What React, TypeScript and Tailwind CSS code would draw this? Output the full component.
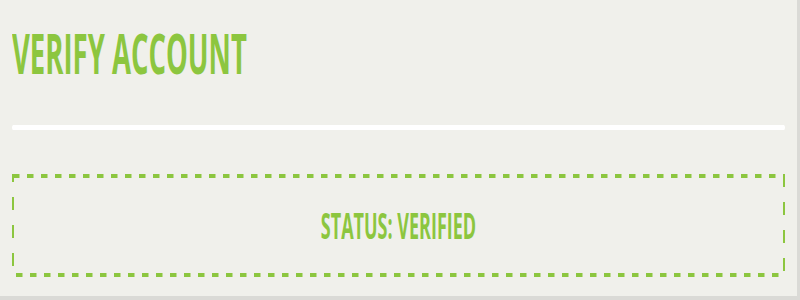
export default function App() {
  return (
    <div className="h-[300px] w-[800px] overflow-hidden border-r-[3px] border-b-[4px] border-[#dadad6] bg-[#f0f0eb] font-['Open_Sans',sans-serif]">
      {/* the reference is squeezed horizontally, so lay out at double width and scale */}
      <div className="w-[1594px] origin-top-left scale-x-50 px-[24px]">
        <h1 className="mt-[25px] text-[55px] leading-[56px] font-bold text-[#8cc63f]">VERIFY ACCOUNT</h1>
        <div className="mt-[44px] h-[5px] rounded-full bg-white" />
        <div className="relative mt-[44px] flex h-[103px] items-center justify-center">
          <svg className="absolute inset-0" width="1546" height="103" viewBox="0 0 1546 103" aria-hidden>
            <rect
              x="2"
              y="2"
              width="1542"
              height="99"
              fill="none"
              stroke="#8cc63f"
              strokeWidth="4"
              strokeDasharray="13 15"
            />
          </svg>
          <p className="text-[36px] leading-[36px] font-bold text-[#8cc63f]">STATUS: VERIFIED</p>
        </div>
      </div>
    </div>
  );
}
